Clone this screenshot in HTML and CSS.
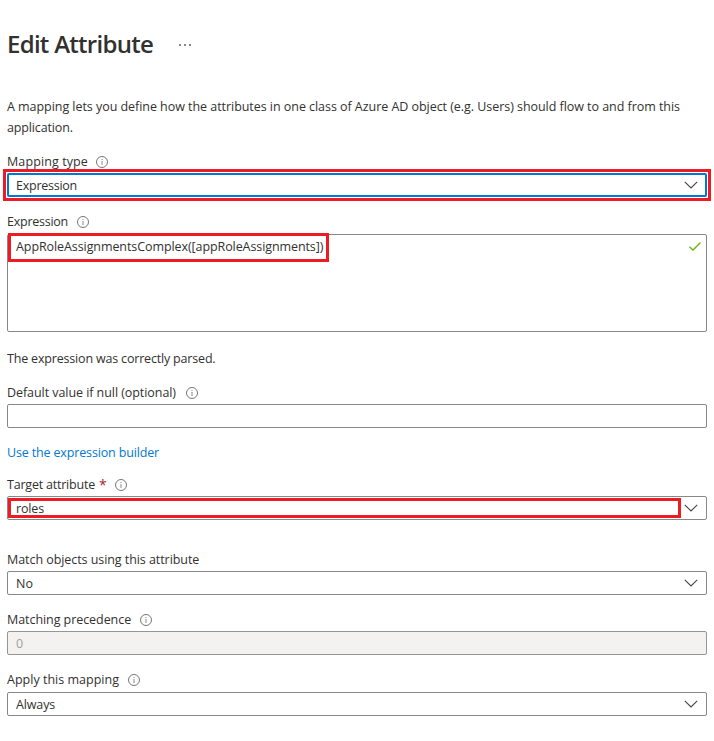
FILE: index.html
```html
<!DOCTYPE html>
<html lang="en">
<head>
<meta charset="utf-8">
<title>Edit Attribute</title>
<link rel="stylesheet" href="styles.css">
</head>
<body>
<svg class="defs" aria-hidden="true">
  <symbol id="info" viewBox="0 0 12 12"><circle cx="6" cy="6" r="5.5" fill="none" stroke="#605e5c" stroke-width="0.85"/><path d="M6 5v4M6 3v1" fill="none" stroke="#8a8886" stroke-width="1"/></symbol>
  <symbol id="chevron" viewBox="0 0 14 8"><path d="M0.8 0.8L7 7L13.2 0.8" fill="none" stroke="#484644" stroke-width="1.15"/></symbol>
  <symbol id="check" viewBox="0 0 12 9"><path d="M0.5 4.8L4 8.1L11.5 0.6" fill="none" stroke="#6bb420" stroke-width="1.4"/></symbol>
</svg>
<main class="panel">
  <header class="header">
    <h1>Edit Attribute</h1>
    <span class="more"><i></i><i></i><i></i></span>
  </header>
  <p class="intro">A mapping lets you define how the attributes in one class of Azure AD object (e.g. Users) should flow to and from this <span class="snug">application.</span></p>

  <section class="field">
    <div class="label"><span class="loose">Mapping type</span><svg class="info"><use href="#info"/></svg></div>
    <div class="box select focused"><span class="tight">Expression</span><svg class="chevron"><use href="#chevron"/></svg><div class="mark mark-type"></div></div>
  </section>

  <section class="field expression">
    <div class="label"><span class="tight">Expression</span><svg class="info far"><use href="#info"/></svg></div>
    <div class="box area"><span class="code">AppRoleAssignmentsComplex([appRoleAssignments])</span><svg class="check"><use href="#check"/></svg><div class="mark mark-code"></div></div>
  </section>

  <p class="status">The expression was correctly parsed.</p>

  <section class="field default">
    <div class="label"><span>Default value if null (optional)</span><svg class="info farther"><use href="#info"/></svg></div>
    <div class="box"></div>
  </section>

  <a class="link">Use the expression builder</a>

  <section class="field target">
    <div class="label"><span class="target-name">Target attribute</span><span class="required">*</span><svg class="info"><use href="#info"/></svg></div>
    <div class="box select"><span class="snug">roles</span><svg class="chevron"><use href="#chevron"/></svg><div class="mark mark-roles"></div></div>
  </section>

  <section class="field match">
    <div class="label"><span>Match objects using this attribute</span></div>
    <div class="box select"><span class="normal">No</span><svg class="chevron"><use href="#chevron"/></svg></div>
  </section>

  <section class="field precedence">
    <div class="label"><span>Matching precedence</span><svg class="info far"><use href="#info"/></svg></div>
    <div class="box disabled"><span>0</span></div>
  </section>

  <section class="field apply">
    <div class="label"><span class="normal">Apply this mapping</span><svg class="info far"><use href="#info"/></svg></div>
    <div class="box select"><span class="snug">Always</span><svg class="chevron"><use href="#chevron"/></svg></div>
  </section>
</main>
</body>
</html>
```
FILE: styles.css
```css
* { box-sizing: border-box; }
body {
  margin: 0;
  background: #fff;
  color: #323130;
  font: 12.5px/20px "Open Sans", "Noto Sans", sans-serif;
  letter-spacing: -0.062px;
}
.defs { position: absolute; width: 0; height: 0; }
.panel { padding: 28px 7px 0; }
.header { display: flex; align-items: center; height: 32px; }
h1 {
  margin: 0;
  font-size: 24px;
  line-height: 32px;
  font-weight: 600;
  letter-spacing: -0.72px;
}
.more { display: flex; gap: 3px; margin: 1px 0 0 26px; }
.more i { width: 2px; height: 2px; background: #8a8886; }
.intro { margin: 36px 0 0; line-height: 21px; letter-spacing: -0.046px; }

.normal { letter-spacing: 0.012px; }
.snug { letter-spacing: -0.14px; }
.tight { letter-spacing: -0.25px; }
.loose { letter-spacing: 0.105px; }
.code { letter-spacing: -0.085px; }

.field { margin-top: 13px; }
.expression { margin-top: 14px; }
.label {
  display: flex;
  align-items: center;
  height: 22px;
  white-space: nowrap;
}
.info { width: 12px; height: 12px; margin-left: 8px; }
.far { margin-left: 9px; }
.farther { margin-left: 10px; }
.box {
  position: relative;
  display: flex;
  align-items: center;
  justify-content: space-between;
  height: 24px;
  padding: 0 8px;
  border: 1px solid #8a8886;
  border-radius: 2px;
}
.box > span { padding-top: 2px; }
.chevron { width: 14px; height: 8px; }
.focused { border: 2px solid #0078d4; padding: 0 7px; }
.area { height: 98px; margin-top: 1px; padding: 0 5px 0 8px; align-items: flex-start; }
.check { width: 12px; height: 9px; margin-top: 7px; }
.mark { position: absolute; border: 3px solid #ed1c24; }
.mark-type { inset: -6px; }
.mark-code { left: 0; top: -2px; width: 321px; height: 29px; }
.mark-roles { left: 0; top: 1px; width: 673px; height: 20px; }
.status { margin: 17px 0 0; letter-spacing: -0.18px; }
.default { margin-top: 13px; }
.link { display: block; width: max-content; margin-top: 15px; color: #0078d4; letter-spacing: -0.153px; }
.target { margin-top: 11px; }
.target-name { letter-spacing: -0.21px; }
.required { margin-left: 4px; color: #a4262c; font-size: 14px; }
.match { margin-top: 29px; }
.precedence, .apply { margin-top: 14px; }
.apply .box { margin-top: 1px; }
.disabled { background: #f3f2f1; border-color: #979593; color: #a19f9d; }
```
